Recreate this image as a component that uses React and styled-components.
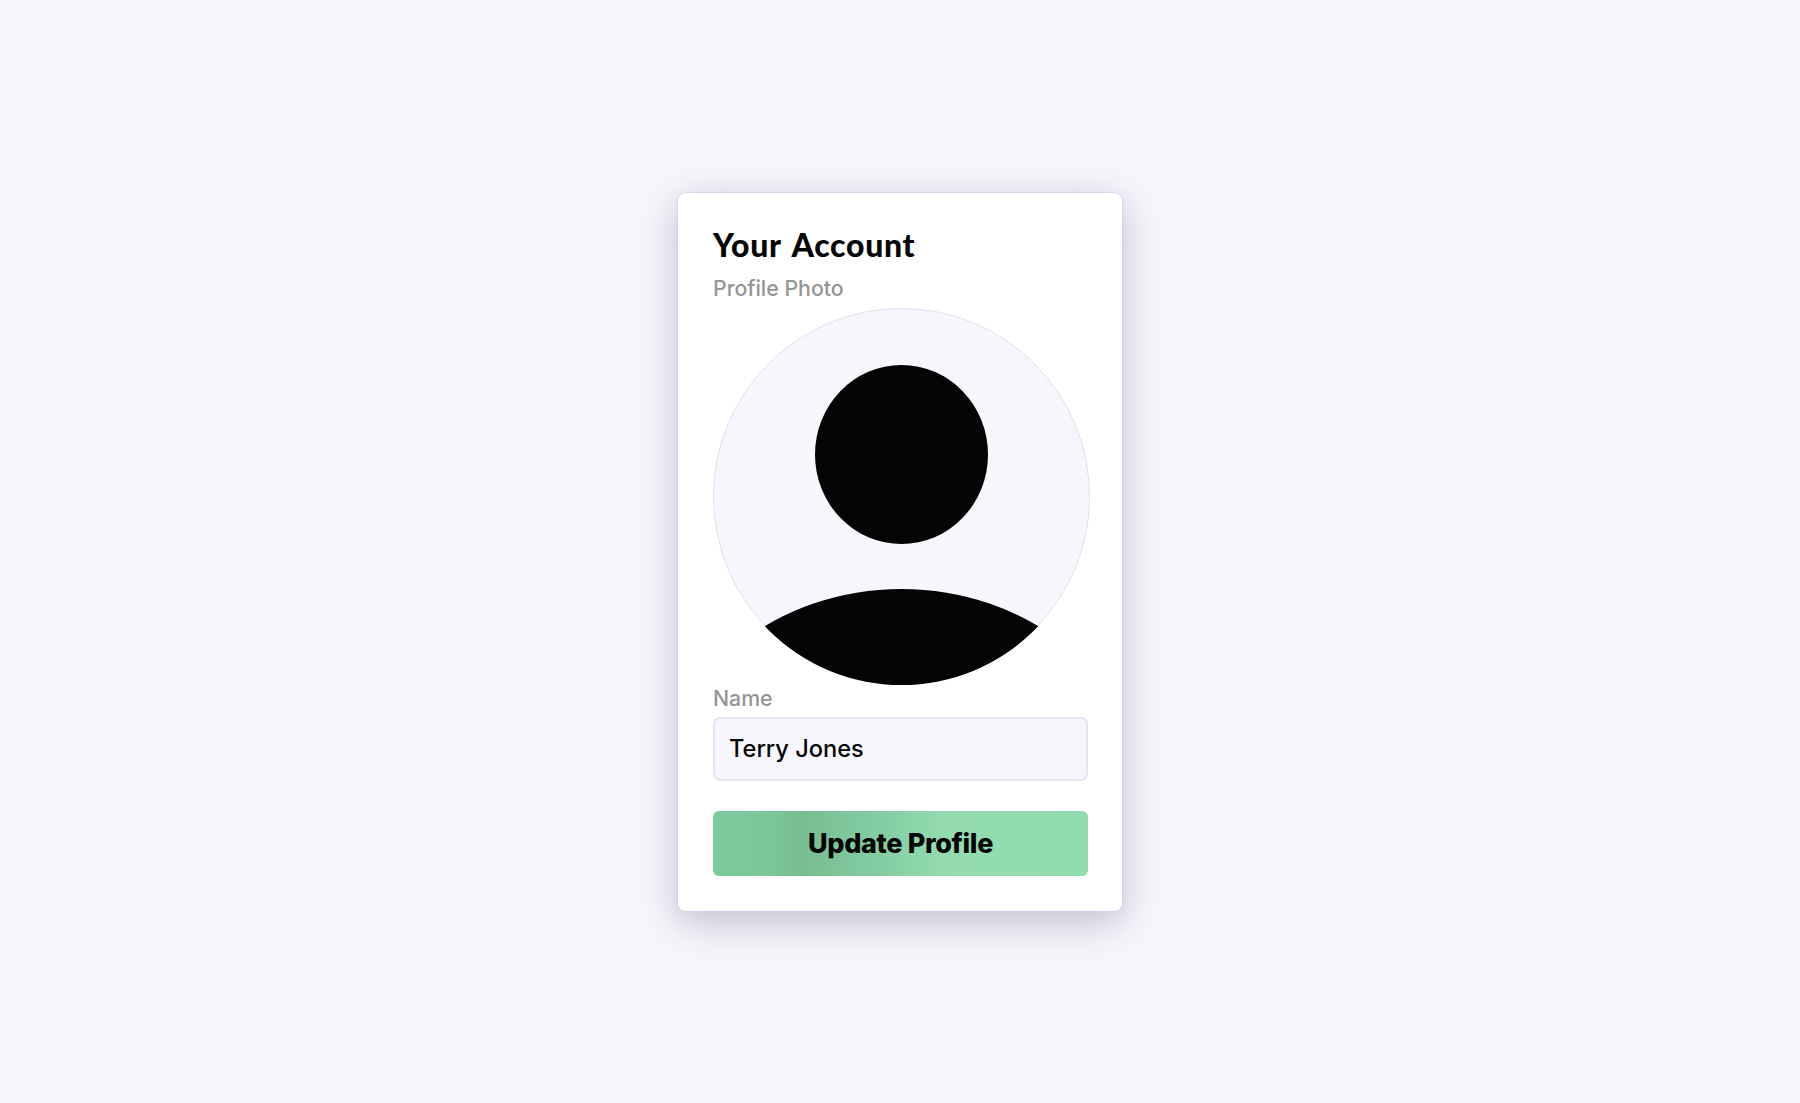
import React from 'react';
import styled, { createGlobalStyle } from 'styled-components';

const Global = createGlobalStyle`
  * { box-sizing: border-box; }
  html, body { margin: 0; padding: 0; }
  body {
    background: #f6f6fc;
    font-family: "Inter", "Liberation Sans", sans-serif;
  }
`;

const App = () => {
  return (
    <Page>
      <Global />
      <Card>
        <Title>Your Account</Title>
        <FieldLabel>Profile Photo</FieldLabel>
        <Avatar viewBox="0 0 377 377" aria-label="profile photo">
          <defs>
            <clipPath id="avatar-clip">
              <circle cx="188.5" cy="188.5" r="188.5" />
            </clipPath>
          </defs>
          <circle cx="188.5" cy="188.5" r="188" fill="#f6f6fc" stroke="#e0e0ee" />
          <g clipPath="url(#avatar-clip)">
            <ellipse cx="188.5" cy="146.5" rx="86.5" ry="89.5" fill="#040404" />
            <ellipse cx="188.5" cy="471" rx="230" ry="190" fill="#040404" />
          </g>
        </Avatar>
        <NameLabel>Name</NameLabel>
        <NameInput defaultValue="Terry Jones" />
        <UpdateButton>Update Profile</UpdateButton>
      </Card>
    </Page>
  );
};

export default App;

const Page = styled.div`
  display: flex;
  align-items: center;
  justify-content: center;
  min-height: 100vh;
`;

const Card = styled.div`
  display: flex;
  flex-direction: column;
  width: 444px;
  height: 718px;
  padding: 32px 35px 35px;
  background: #ffffff;
  border-radius: 8px;
  box-shadow: 0 0 1px 1px rgba(205, 205, 235, 0.7), 0 10px 38px rgba(95, 95, 135, 0.38);
`;

const Title = styled.h1`
  margin: 0;
  font-family: "Lato", sans-serif;
  font-size: 32px;
  line-height: 40px;
  font-weight: 900;
  letter-spacing: 0.7px;
  word-spacing: 3px;
  color: #050505;
`;

const FieldLabel = styled.label`
  margin-top: 9px;
  font-size: 21.3px;
  line-height: 28px;
  font-weight: 500;
  color: #959595;
`;

const Avatar = styled.svg`
  display: block;
  flex: none;
  width: 377px;
  height: 377px;
  margin-top: 6px;
`;

const NameLabel = styled(FieldLabel)`
  margin-top: -1px;
`;

const NameInput = styled.input`
  width: 375px;
  height: 65px;
  margin-top: 5px;
  padding: 0 14px;
  background: #f6f6fc;
  border: 2px solid #e4e4f3;
  border-radius: 7px;
  outline: none;
  font-family: "Inter", sans-serif;
  font-size: 23.6px;
  font-weight: 500;
  color: #060606;
`;

const UpdateButton = styled.button`
  width: 375px;
  height: 66px;
  margin-top: 30px;
  border: none;
  border-radius: 6px;
  background: linear-gradient(90deg, #7dca9e 0%, #7bc79a 14%, #77bd92 24%, #84cda2 45%, #94dcb0 62%, #91dcae 100%);
  font-family: "Inter", sans-serif;
  font-size: 27px;
  font-weight: 800;
  letter-spacing: -0.35px;
  color: #050505;
`;
